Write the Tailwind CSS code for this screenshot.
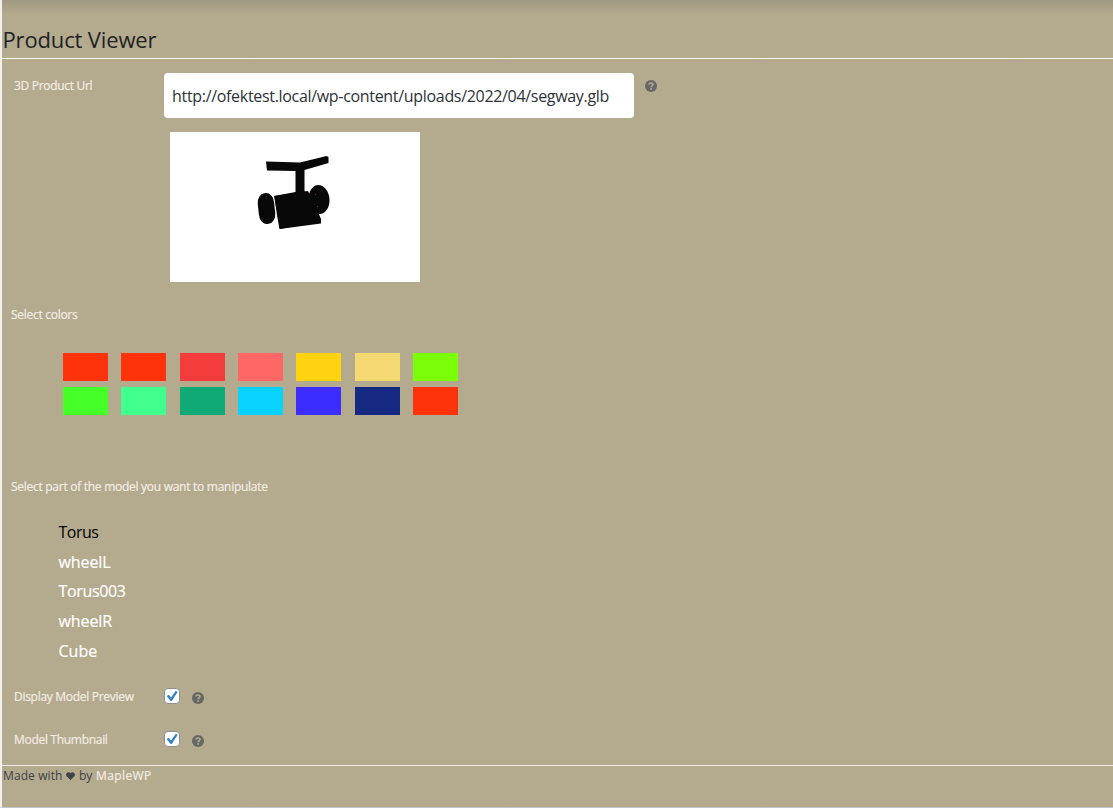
<!DOCTYPE html>
<html lang="en">
<head>
<meta charset="utf-8">
<title>Product Viewer</title>
<script src="https://cdn.jsdelivr.net/npm/@tailwindcss/browser@4"></script>
</head>
<body class="h-[808px] overflow-hidden bg-[#b4aa8d] font-['Open_Sans','Noto_Sans',sans-serif] text-[#f3ece5]">
<svg class="hidden">
  <symbol id="help" viewBox="0 0 12 12"><circle cx="6" cy="6" r="6" fill="#666"/><path d="M4.1 4.6C4.1 2.5 8 2.5 8 4.6C8 5.9 6.1 5.8 6.1 7.3" fill="none" stroke="#b4aa8d" stroke-width="1.6"/><rect x="5.2" y="8.1" width="1.8" height="1.6" fill="#b4aa8d"/></symbol>
  <symbol id="check" viewBox="0 0 16 16"><rect x=".5" y=".5" width="15" height="15" rx="3.5" fill="#fff" stroke="#8c8f94"/><path d="M2.600 8L4.800 6.800L7 9.500L11.800 2.800L13.600 3.900L7.700 13H6.600Z" fill="#3582c4"/></symbol>
</svg>
<main class="flex h-[808px] flex-col border-b border-[#c3c4c7] border-l-2 border-l-[#f0f0f1] bg-linear-to-b from-[#9f9983] to-[#b4aa8d] to-[14px] whitespace-nowrap">
  <header class="h-[59px] shrink-0 border-b border-white pt-[23px] pl-[0.5px] text-[22px] leading-[32px] tracking-[-0.15px] text-[#1d2327]">Product Viewer</header>

  <section class="flex h-[73px] shrink-0 pt-[14px] pl-3">
    <label class="w-[150px] pt-[4px] text-[12px] leading-[18px] tracking-[-0.3px] [-webkit-text-stroke:0.2px]">3D Product Url</label>
    <div class="flex h-[45px] w-[470px] items-center rounded bg-white pl-[8px] text-[16px] tracking-[-0.315px] text-[#2c3338]">http://ofektest.local/wp-content/uploads/2022/04/segway.glb</div>
    <svg class="mt-[7px] ml-[11px] size-3"><use href="#help"/></svg>
  </section>
  <div class="ml-[168px] h-[150px] w-[250px] shrink-0 bg-white">
    <svg width="250" height="150" fill="#080808">
      <path d="M96 29.5L130 30.5L156.500 24L158.500 25V31L134.500 38V59L137 61L142 67L151 88V91.500L109.500 97L107 83L104.500 64L125.500 60V39L97 38.500Z"/>
      <ellipse cx="149" cy="67.500" rx="10.500" ry="14.500" transform="rotate(-5 149 67.500)"/>
      <rect x="88.300" y="61" width="16.400" height="31" rx="7.500" ry="10" transform="rotate(-6 96.500 76.500)"/>
      <path d="M104 64L138 59L151 87V89L110 97Z"/>
      <path d="M145 62h1v1h-1zM147 74h1v1h-1z" fill="#a01515"/>
    </svg>
  </div>

  <h2 class="mt-[24px] h-[18px] shrink-0 pl-[9px] text-[12px] leading-[18px] tracking-[-0.28px] [-webkit-text-stroke:0.2px]">Select colors</h2>
  <div class="mt-[29px] ml-[61px] grid h-[62px] w-[395px] shrink-0 grid-cols-[repeat(7,44.8px)] grid-rows-[28px_28px] justify-between gap-y-[6px]">
    <i class="bg-[#ff330b]"></i><i class="bg-[#ff330b]"></i><i class="bg-[#f43b3b]"></i><i class="bg-[#ff6666]"></i><i class="bg-[#ffd310]"></i><i class="bg-[#f4d972]"></i><i class="bg-[#7bff08]"></i>
    <i class="bg-[#45ff29]"></i><i class="bg-[#41ff8d]"></i><i class="bg-[#10aa77]"></i><i class="bg-[#08d2ff]"></i><i class="bg-[#3b2dff]"></i><i class="bg-[#162982]"></i><i class="bg-[#ff330b]"></i>
  </div>

  <h2 class="mt-[63px] h-[18px] shrink-0 pl-[9px] text-[12px] leading-[18px] tracking-[-0.275px] [-webkit-text-stroke:0.2px]">Select part of the model you want to manipulate</h2>
  <ul class="mt-[22px] h-[149px] shrink-0 pl-[56.5px] text-[16px] leading-[29.7px] text-white">
    <li class="tracking-[-0.5px] text-black">Torus</li>
    <li class="tracking-[-0.1px] [-webkit-text-stroke:0.2px]">wheelL</li>
    <li class="tracking-[-0.35px] [-webkit-text-stroke:0.2px]">Torus003</li>
    <li class="tracking-[-0.1px] [-webkit-text-stroke:0.2px]">wheelR</li>
    <li class="[-webkit-text-stroke:0.2px]">Cube</li>
  </ul>

  <div class="mt-[21px] flex h-[18px] shrink-0 pl-3 text-[12px] leading-[18px] tracking-[-0.29px]"><label class="w-[150px] [-webkit-text-stroke:0.2px]">Display Model Preview</label><svg class="size-4"><use href="#check"/></svg><svg class="mt-[4px] ml-[12px] size-3"><use href="#help"/></svg></div>
  <div class="mt-[25px] flex h-[18px] shrink-0 pl-3 text-[12px] leading-[18px] tracking-[-0.3px]"><label class="w-[150px] [-webkit-text-stroke:0.2px]">Model Thumbnail</label><svg class="size-4"><use href="#check"/></svg><svg class="mt-[4px] ml-[12px] size-3"><use href="#help"/></svg></div>
  <footer class="mt-[16px] flex border-t border-[#f3ece5] text-[12px] leading-[20px] text-[#3c434a]"><span class="w-[60px] pl-px tracking-[0.1px]">Made with</span><svg class="mr-1 ml-[4px] mt-[6px] h-2 w-[9px]" viewBox="0 0 9 8"><path d="M4.500 8L.6 4.300C-1.200 1.500 2.500-1.500 4.500 1.200C6.500-1.500 10.200 1.500 8.400 4.300Z" fill="#3c434a"/></svg><span class="w-[17px]">by</span><span class="tracking-[0.4px] text-[#f3ece5] [-webkit-text-stroke:0.2px]">MapleWP</span></footer>
</main>
</body>
</html>
